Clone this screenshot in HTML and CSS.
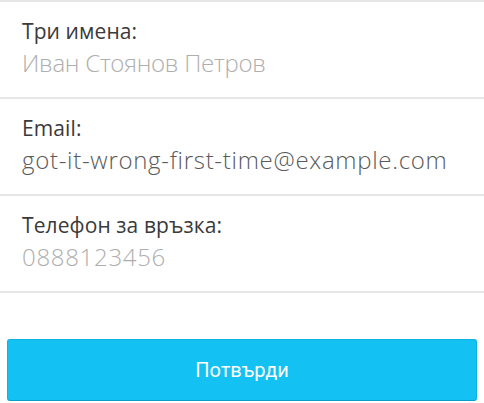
FILE: index.html
```html
<!DOCTYPE html>
<html lang="bg">
<head>
<meta charset="utf-8">
<link rel="stylesheet" href="styles.css">
</head>
<body>
<div class="form">
  <div class="field">
    <div class="label">Три имена:</div>
    <div class="value placeholder cyr">Иван Стоянов Петров</div>
  </div>
  <div class="field">
    <div class="label">Email:</div>
    <div class="value">got-it-wrong-first-time@example.com</div>
  </div>
  <div class="field">
    <div class="label">Телефон за връзка:</div>
    <div class="value placeholder">0888123456</div>
  </div>
  <div class="actions">
    <button class="submit">Потвърди</button>
  </div>
</div>
</body>
</html>
```

FILE: styles.css
```css
html, body {
  margin: 0;
  padding: 0;
  background: #fff;
}
.form {
  width: 484px;
  border-top: 2px solid #e6e6e6;
}
.field {
  height: 95px;
  border-bottom: 2px solid #e6e6e6;
  padding: 0 22px;
  display: flex;
  flex-direction: column;
  font-family: "Open Sans", sans-serif;
}
.label {
  margin-top: 16px;
  font-size: 21px;
  line-height: 26px;
  color: #3a3a3a;
  letter-spacing: 0.1px;
}
.value {
  margin-top: 4px;
  font-size: 24px;
  line-height: 30px;
  font-weight: 300;
  letter-spacing: 0.7px;
  color: #5a5a5a;
}
.value.placeholder {
  color: #aeaeae;
}
.value.cyr {
  letter-spacing: -0.25px;
}
.actions {
  padding: 46px 7px 0 7px;
}
.submit {
  display: block;
  width: 100%;
  height: 62px;
  background: #13c1f2;
  border: 1px solid #0fb1e0;
  border-bottom-color: #0d9ecb;
  border-radius: 3px;
  color: #fff;
  font-family: Roboto, sans-serif;
  font-size: 20px;
}
```
